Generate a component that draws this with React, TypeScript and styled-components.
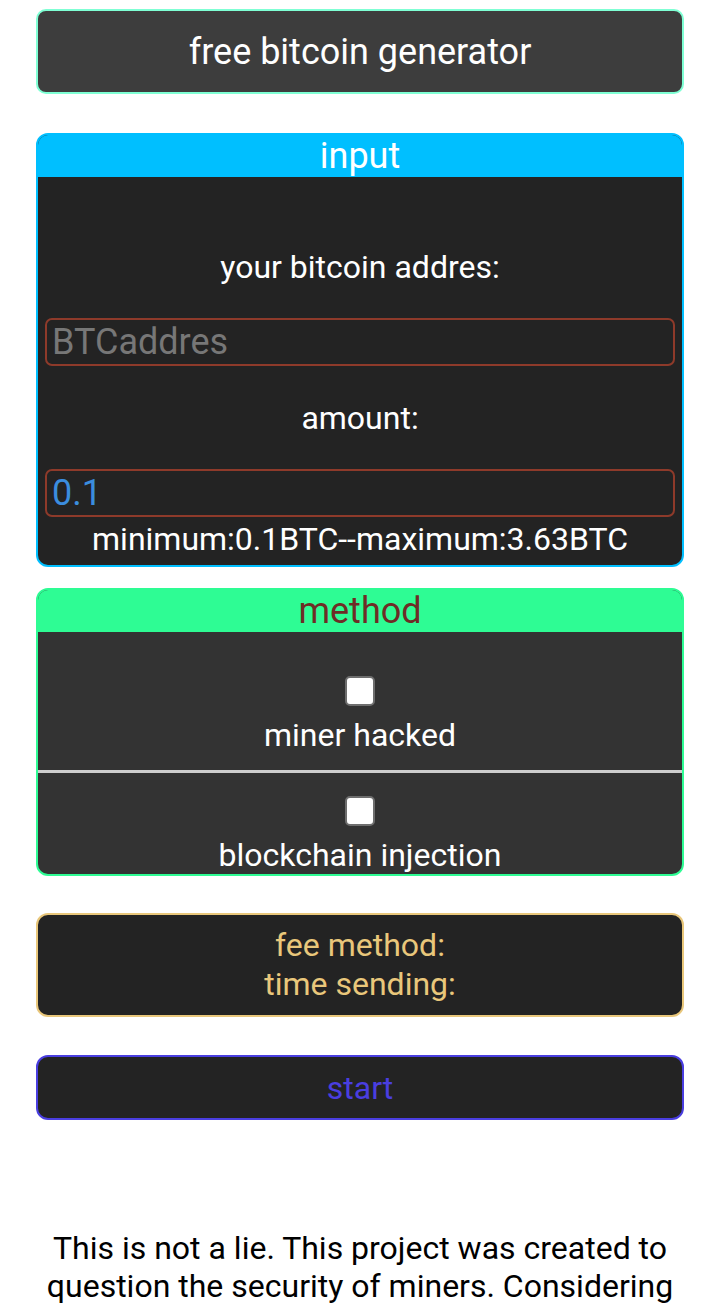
import React from "react";
import styled, { createGlobalStyle } from "styled-components";

const GlobalStyle = createGlobalStyle`
  html, body {
    margin: 0;
    padding: 0;
    background: #ffffff;
  }
  body {
    font-family: Roboto, "Noto Sans", "Liberation Sans", sans-serif;
  }
  * { box-sizing: border-box; }
`;

const Page = styled.div`
  width: 720px;
  padding: 9px 36px 0;
  display: flex;
  flex-direction: column;
  align-items: stretch;
`;

const TitleBar = styled.div`
  height: 85px;
  border: 2px solid #7fffd4;
  border-radius: 10px;
  background: #3d3d3d;
  color: #ffffff;
  font-size: 36px;
  display: flex;
  align-items: center;
  justify-content: center;
`;

const Card = styled.section<{ $border: string; $bg: string; $gap: number }>`
  margin-top: ${(p) => p.$gap}px;
  border: 2px solid ${(p) => p.$border};
  border-radius: 12px;
  background: ${(p) => p.$bg};
  overflow: hidden;
  display: flex;
  flex-direction: column;
`;

const CardHeader = styled.div<{ $bg: string; $color: string }>`
  height: 42px;
  background: ${(p) => p.$bg};
  color: ${(p) => p.$color};
  font-size: 36px;
  line-height: 42px;
  text-align: center;
`;

const InputBody = styled.div`
  padding: 38px 7px 0;
  display: flex;
  flex-direction: column;
`;

const FieldLabel = styled.div`
  height: 103px;
  color: #ffffff;
  font-size: 32px;
  display: flex;
  align-items: center;
  justify-content: center;
`;

const TextField = styled.input<{ $valueColor: string }>`
  display: block;
  width: 100%;
  height: 48px;
  margin: 0;
  padding: 0 5px;
  border: 2px solid #8e3a2a;
  border-radius: 7px;
  background: transparent;
  color: ${(p) => p.$valueColor};
  font-family: Roboto, "Noto Sans", sans-serif;
  font-size: 36px;
  outline: none;
  &::placeholder {
    color: #777777;
  }
`;

const LimitNote = styled.div`
  color: #ffffff;
  font-size: 32px;
  line-height: 44px;
  text-align: center;
  padding-bottom: 4px;
`;

const MethodOption = styled.div<{ $top: number; $bottom: number }>`
  padding: ${(p) => p.$top}px 0 ${(p) => p.$bottom}px;
  display: flex;
  flex-direction: column;
  align-items: center;
  color: #ffffff;
  font-size: 32px;
  line-height: 38px;
`;

const Divider = styled.div`
  height: 3px;
  background: #cfcfcf;
`;

const Check = styled.input`
  appearance: none;
  -webkit-appearance: none;
  width: 30px;
  height: 30px;
  margin: 0 0 10px;
  border: 2px solid #6e6e6e;
  border-radius: 5px;
  background: #ffffff;
`;

const InfoBox = styled.div`
  margin-top: 37px;
  height: 104px;
  border: 2px solid #e9c77b;
  border-radius: 12px;
  background: #232323;
  color: #e9c77b;
  font-size: 32px;
  line-height: 39px;
  display: flex;
  flex-direction: column;
  align-items: center;
  justify-content: center;
`;

const StartButton = styled.button`
  margin-top: 38px;
  height: 65px;
  border: 2px solid #4a3ee0;
  border-radius: 12px;
  background: #232323;
  color: #4a3ee0;
  font-family: Roboto, "Noto Sans", sans-serif;
  font-size: 32px;
  padding: 0;
`;

const Footer = styled.p`
  margin: 109px 0 0;
  color: #000000;
  font-size: 32px;
  line-height: 38px;
  text-align: center;
`;

export default function App() {
  return (
    <>
      <GlobalStyle />
      <Page>
        <TitleBar>free bitcoin generator</TitleBar>

        <Card $border="#00bfff" $bg="#232323" $gap={39}>
          <CardHeader $bg="#00bfff" $color="#ffffff">input</CardHeader>
          <InputBody>
            <FieldLabel>your bitcoin addres:</FieldLabel>
            <TextField $valueColor="#3b8ddf" placeholder="BTCaddres" />
            <FieldLabel>amount:</FieldLabel>
            <TextField $valueColor="#3b8ddf" defaultValue="0.1" />
            <LimitNote>minimum:0.1BTC--maximum:3.63BTC</LimitNote>
          </InputBody>
        </Card>

        <Card $border="#2efc94" $bg="#333333" $gap={21}>
          <CardHeader $bg="#2efc94" $color="#6e2c26">method</CardHeader>
          <MethodOption $top={44} $bottom={16}>
            <Check type="checkbox" />
            miner hacked
          </MethodOption>
          <Divider />
          <MethodOption $top={23} $bottom={0}>
            <Check type="checkbox" />
            blockchain injection
          </MethodOption>
        </Card>

        <InfoBox>
          <div>fee method:</div>
          <div>time sending:</div>
        </InfoBox>

        <StartButton>start</StartButton>

        <Footer>
          This is not a lie. This project was created to question the security of miners. Considering
          the risks involved, use it responsibly.
        </Footer>
      </Page>
    </>
  );
}
